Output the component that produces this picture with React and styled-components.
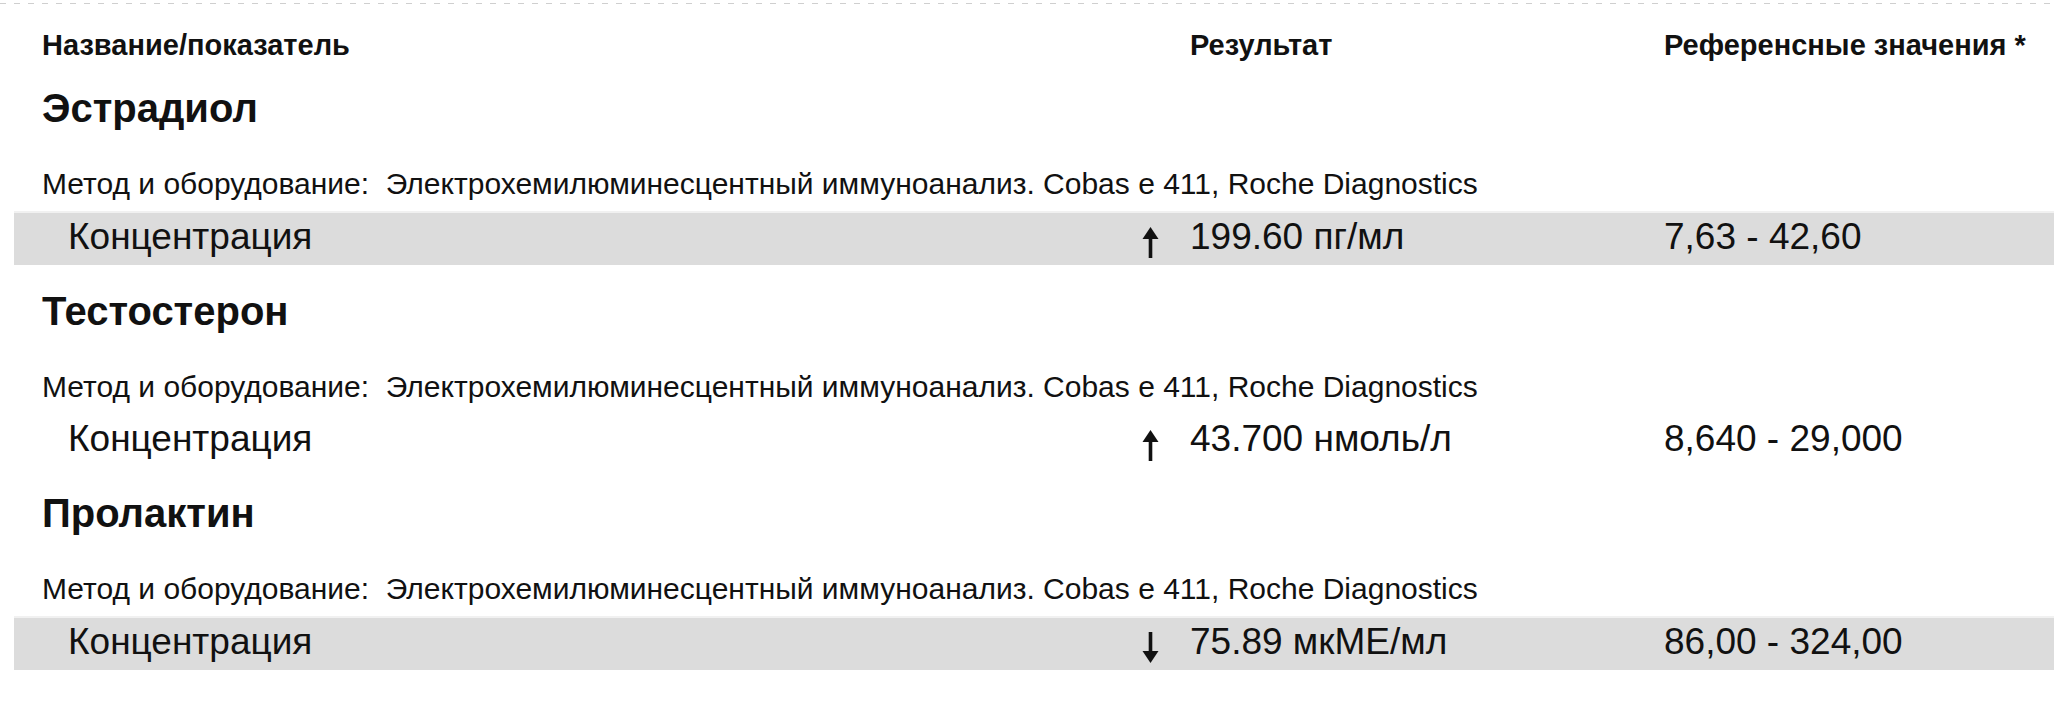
import React from "react";
import styled, { createGlobalStyle } from "styled-components";

const GlobalStyle = createGlobalStyle`
  html, body {
    margin: 0;
    padding: 0;
    background: #ffffff;
  }
  body {
    font-family: "Liberation Sans", Arial, sans-serif;
    color: #111111;
    overflow: hidden;
  }
`;

const Page = styled.div`
  width: 2054px;
  padding-top: 3px;
`;

const DashLine = styled.div`
  height: 1px;
  background: repeating-linear-gradient(
    to right,
    #cfcfcf 0 6px,
    transparent 6px 14px
  );
`;

const Table = styled.div`
  padding-left: 14px;
`;

const Grid = styled.div`
  display: grid;
  grid-template-columns: 1126px 50px 474px 1fr;
`;

const HeadRow = styled(Grid)`
  margin-top: 24px;
  font-size: 29px;
  font-weight: 700;
  line-height: 34px;
`;

const HeadCell = styled.div`
  padding-left: ${(p) => p.$indent || 0}px;
  grid-column: ${(p) => p.$col || "auto"};
  white-space: nowrap;
`;

const Section = styled.section`
  padding-top: 23px;
`;

const Title = styled.h2`
  margin: 0;
  padding-left: 28px;
  font-size: 40px;
  font-weight: 700;
  line-height: 46px;
`;

const Method = styled.div`
  margin-top: 36px;
  padding-left: 28px;
  font-size: 30px;
  line-height: 34.5px;
  white-space: nowrap;
`;

const ValueRow = styled(Grid)`
  margin-top: 11px;
  height: 52px;
  box-sizing: border-box;
  padding-bottom: 4px;
  font-size: 37px;
  line-height: 48px;
  background: ${(p) => (p.$shaded ? "#dcdcdc" : "transparent")};
  box-shadow: ${(p) => (p.$shaded ? "0 -2px 0 #f1f1f1" : "none")};
`;

const Label = styled.div`
  padding-left: 54px;
  white-space: nowrap;
`;

const ArrowCell = styled.div`
  display: flex;
  align-items: center;
  padding-top: 12px;
  padding-left: 2px;
`;

const Cell = styled.div`
  white-space: nowrap;
`;

const Arrow = ({ down }) => (
  <svg
    width="17"
    height="31"
    viewBox="0 0 17 31"
    style={down ? { transform: "scaleY(-1)" } : undefined}
  >
    <path d="M8.5 0 L16.5 12 L0.5 12 Z" fill="#111" />
    <rect x="6.7" y="10" width="3.6" height="21" fill="#111" />
  </svg>
);

const tests = [
  {
    name: "Эстрадиол",
    label: "Концентрация",
    value: "199.60 пг/мл",
    dir: "up",
    ref: "7,63 - 42,60",
    shaded: true,
  },
  {
    name: "Тестостерон",
    label: "Концентрация",
    value: "43.700 нмоль/л",
    dir: "up",
    ref: "8,640 - 29,000",
    shaded: false,
  },
  {
    name: "Пролактин",
    label: "Концентрация",
    value: "75.89 мкМЕ/мл",
    dir: "down",
    ref: "86,00 - 324,00",
    shaded: true,
  },
];

const METHOD =
  "Метод и оборудование:\u00a0\u00a0Электрохемилюминесцентный иммуноанализ. Cobas e 411, Roche Diagnostics";

export default function App() {
  return (
    <Page>
      <GlobalStyle />
      <DashLine />
      <Table>
        <HeadRow>
          <HeadCell $indent={28}>Название/показатель</HeadCell>
          <HeadCell $col="3">Результат</HeadCell>
          <HeadCell>Референсные значения *</HeadCell>
        </HeadRow>
        {tests.map((t) => (
          <Section key={t.name}>
            <Title>{t.name}</Title>
            <Method>{METHOD}</Method>
            <ValueRow $shaded={t.shaded}>
              <Label>{t.label}</Label>
              <ArrowCell>
                <Arrow down={t.dir === "down"} />
              </ArrowCell>
              <Cell>{t.value}</Cell>
              <Cell>{t.ref}</Cell>
            </ValueRow>
          </Section>
        ))}
      </Table>
    </Page>
  );
}
